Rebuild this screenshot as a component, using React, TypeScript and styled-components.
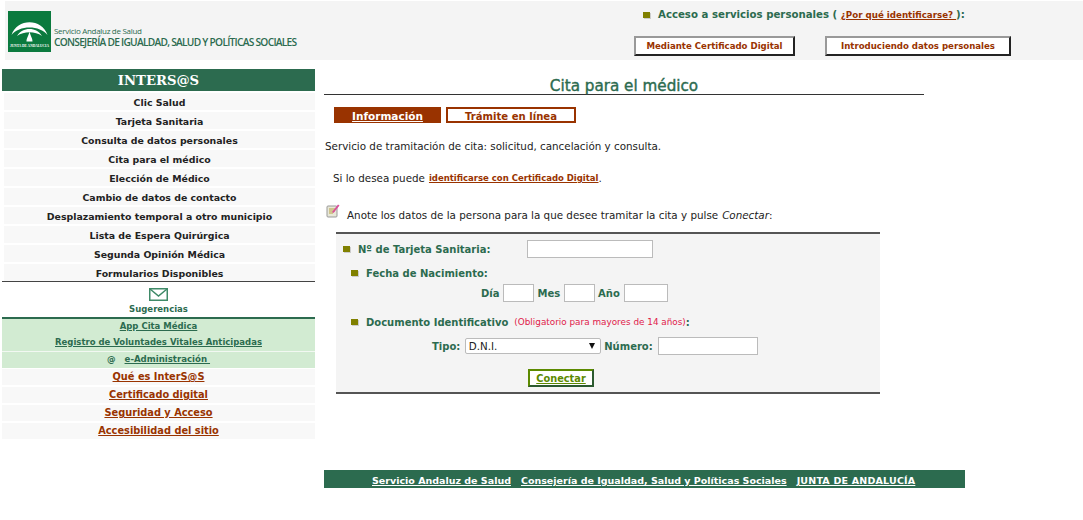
import React from "react";
import styled, { createGlobalStyle } from "styled-components";

const GlobalStyle = createGlobalStyle`
  html, body {
    margin: 0;
    padding: 0;
    background: #fff;
    font-family: "DejaVu Sans", Verdana, sans-serif;
    font-size: 10px;
  }
`;

const green = "#2c6b4f";
const brown = "#993300";

const Page = styled.div`
  width: 1083px;
  height: 520px;
  overflow: hidden;
`;

const Header = styled.header`
  margin: 1px 0 0 5px;
  height: 59px;
  background: #f4f4f4;
  display: flex;
`;

const Brand = styled.div`
  width: 629px;
  padding: 10px 0 0 3px;
  box-sizing: border-box;
  display: flex;
  align-items: flex-start;
`;

const BrandText = styled.div`
  margin: 15px 0 0 3px;
  color: ${green};
  font-family: "Open Sans", sans-serif;
`;

const BrandSmall = styled.div`
  font-size: 8px;
  line-height: 10px;
  letter-spacing: -0.3px;
`;

const BrandBig = styled.div`
  font-size: 10.2px;
  line-height: 12px;
  font-weight: 600;
  letter-spacing: -0.73px;
  white-space: nowrap;
`;

const Access = styled.div`
  padding-top: 7px;
`;

const AccessLine = styled.div`
  height: 14px;
  line-height: 14px;
  padding-left: 9px;
  display: flex;
  align-items: center;
  color: ${green};
  font-weight: bold;
  font-size: 10.2px;
  white-space: pre;
`;

const Bullet = styled.span<{ $gap: number }>`
  display: inline-block;
  flex: none;
  width: 7px;
  height: 6px;
  background: #808000;
  box-shadow: 1px 1px 0 #ccc;
  margin-right: ${(p) => p.$gap}px;
`;

const AccessLink = styled.a`
  color: ${brown};
  font-size: 8.7px;
  text-decoration: underline;
`;

const AccessButtons = styled.div`
  display: flex;
  gap: 30px;
  margin: 14px 0 0 0;
`;

const AccessButton = styled.button<{ $w: number }>`
  width: ${(p) => p.$w}px;
  height: 20px;
  padding: 0;
  background: #fff;
  border: 2px solid;
  border-color: #999 #222 #222 #999;
  color: ${brown};
  font: bold 8.6px "DejaVu Sans", sans-serif;
`;

const Main = styled.div`
  display: flex;
  margin-top: 9px;
`;

const Sidebar = styled.nav`
  width: 313px;
  margin-left: 2px;
  flex: none;
`;

const SideTitle = styled.div`
  height: 22px;
  background: ${green};
  color: #fff;
  text-align: center;
  font: bold 13.2px/24px "DejaVu Serif", serif;
`;

const MenuList = styled.div`
  display: flex;
  flex-direction: column;
  gap: 2px;
  margin-top: 2px;
`;

const MenuRow = styled.a`
  display: block;
  height: 17px;
  line-height: 20px;
  margin-left: 2px;
  background: #f8f8f8;
  color: #222;
  font-weight: bold;
  font-size: 9.4px;
  text-align: center;
  overflow: hidden;
`;

const Suggest = styled.div`
  border-top: 1px solid #444;
  height: 29px;
  border-bottom: 2px solid ${green};
  display: flex;
  flex-direction: column;
  align-items: center;
  padding-top: 6px;
  color: ${green};
  font-weight: bold;
  font-size: 8.5px;
  gap: 3px;
`;

const GreenBlock = styled.div`
  background: #d2ebd2;
  border-bottom: 1px solid #f2f8f2;
  text-align: center;
`;

const GreenLink = styled.a`
  display: block;
  height: 16px;
  line-height: 15px;
  color: ${green};
  font-weight: bold;
  font-size: 8.5px;
  text-decoration: underline;
`;

const GreenAt = styled.div`
  background: #d2ebd2;
  height: 16px;
  line-height: 15px;
  text-align: center;
  color: ${green};
  font-weight: bold;
  font-size: 8.6px;
  white-space: pre;
  a {
    text-decoration: underline;
  }
`;

const RedList = styled.div`
  display: flex;
  flex-direction: column;
  gap: 2px;
  margin-top: 1px;
`;

const RedRow = styled.a`
  display: block;
  height: 16px;
  line-height: 16px;
  background: #f8f8f8;
  color: ${brown};
  font-weight: bold;
  font-size: 9.8px;
  text-align: center;
  text-decoration: underline;
`;

const Content = styled.main`
  margin-left: 9px;
  width: 641px;
`;

const Title = styled.h1`
  width: 600px;
  margin: 0;
  height: 25px;
  line-height: 34px;
  border-bottom: 1px solid #333;
  color: ${green};
  font-size: 15.2px;
  font-weight: normal;
  -webkit-text-stroke: 0.4px ${green};
  text-align: center;
`;

const Tabs = styled.div`
  display: flex;
  gap: 5px;
  margin: 12px 0 0 10px;
`;

const Tab = styled.a<{ $active?: boolean; $w: number }>`
  width: ${(p) => p.$w}px;
  height: 16px;
  box-sizing: border-box;
  line-height: 15px;
  text-align: center;
  font-weight: bold;
  font-size: ${(p) => (p.$active ? 10.5 : 10.1)}px;
  border: 2px solid ${brown};
  background: ${(p) => (p.$active ? brown : "#fff")};
  color: ${(p) => (p.$active ? "#fff" : brown)};
  text-decoration: ${(p) => (p.$active ? "underline" : "none")};
`;

const Para = styled.p<{ $indent: number; $top: number }>`
  margin: ${(p) => p.$top}px 0 0 ${(p) => p.$indent}px;
  height: 14px;
  line-height: 14px;
  color: #222;
  font-size: 10.35px;
  white-space: nowrap;
  display: flex;
  align-items: center;
  a {
    color: ${brown};
    font-weight: bold;
    font-size: 8.5px;
    text-decoration: underline;
    margin-left: 4px;
  }
  em {
    margin-left: 4px;
  }
`;

const NoteIcon = styled.svg`
  flex: none;
  margin: -9px 7px 0 -1px;
`;

const FormBox = styled.form`
  margin: 10px 0 0 12px;
  width: 544px;
  height: 162px;
  box-sizing: border-box;
  background: #f4f4f4;
  border-top: 2px solid #555;
  border-bottom: 2px solid #555;
`;

const Field = styled.div<{ $top: number; $indent: number }>`
  display: flex;
  align-items: center;
  margin: ${(p) => p.$top}px 0 0 ${(p) => p.$indent}px;
  height: 20px;
  color: ${green};
  font-weight: bold;
  font-size: 10px;
  white-space: pre;
`;

const Note = styled.span`
  margin-left: 6px;
  color: #e0204a;
  font-weight: normal;
  font-size: 8.85px;
`;

const TextInput = styled.input<{ $w: number; $ml?: number }>`
  width: ${(p) => p.$w}px;
  height: 18px;
  margin-left: ${(p) => p.$ml ?? 0}px;
  box-sizing: border-box;
  padding: 0;
  background: #fff;
  border: 1px solid #bbb;
`;

const SelectWrap = styled.span`
  position: relative;
  display: inline-block;
  height: 16px;
  margin-left: 1px;
  &::after {
    content: "";
    position: absolute;
    right: 6px;
    top: 5px;
    border-left: 3.5px solid transparent;
    border-right: 3.5px solid transparent;
    border-top: 6px solid #111;
  }
`;

const Select = styled.select`
  appearance: none;
  display: block;
  width: 136px;
  height: 16px;
  padding: 0 0 0 3px;
  box-sizing: border-box;
  background: #fff;
  border: 1px solid #bbb;
  border-radius: 2px;
  font: 10.3px "DejaVu Sans", sans-serif;
  color: #222;
`;

const Connect = styled.button`
  display: block;
  margin: 13px 0 0 192px;
  width: 66px;
  height: 18px;
  padding: 0;
  background: #fff;
  border: 2px solid;
  border-color: #5c8a00 #2c5a30 #2c5a30 #5c8a00;
  color: #5c8a00;
  font: bold 9.8px "DejaVu Sans", sans-serif;
  text-decoration: underline;
`;

const Footer = styled.footer`
  margin-top: 76px;
  height: 18px;
  background: ${green};
  display: flex;
  gap: 10px;
  padding-left: 48px;
  line-height: 22px;
`;

const FootLink = styled.a<{ $spaced?: boolean }>`
  color: #fff;
  font-weight: bold;
  font-size: 9.5px;
  letter-spacing: ${(p) => (p.$spaced ? "0.2px" : "normal")};
  text-decoration: underline;
  white-space: nowrap;
`;

const menu = [
  "Clic Salud",
  "Tarjeta Sanitaria",
  "Consulta de datos personales",
  "Cita para el médico",
  "Elección de Médico",
  "Cambio de datos de contacto",
  "Desplazamiento temporal a otro municipio",
  "Lista de Espera Quirúrgica",
  "Segunda Opinión Médica",
  "Formularios Disponibles",
];

const extras = [
  "Qué es InterS@S",
  "Certificado digital",
  "Seguridad y Acceso",
  "Accesibilidad del sitio",
];

function Logo() {
  return (
    <svg width="43" height="41" viewBox="0 0 43 41">
      <rect width="43" height="41" fill="#0b7a3e" />
      <path d="M3.5 24 C9 7 34 7 39.5 24 C32 14 11 14 3.5 24Z" fill="#fff" />
      <path d="M9 25 C14 15.5 29 15.5 34 25 C27 20 16 20 9 25Z" fill="#fff" />
      <path d="M21.5 20.5 C22.5 25 24.5 27 24.5 30.5 L18.5 30.5 C18.5 27 20.5 25 21.5 20.5Z" fill="#fff" />
      <text x="21.5" y="36" textAnchor="middle" fontSize="3.5" fontWeight="bold" fontFamily="Liberation Serif, serif" fill="#fff">
        JUNTA DE ANDALUCIA
      </text>
    </svg>
  );
}

export default function App() {
  return (
    <Page>
      <GlobalStyle />
      <Header>
        <Brand>
          <Logo />
          <BrandText>
            <BrandSmall>Servicio Andaluz de Salud</BrandSmall>
            <BrandBig>CONSEJERÍA DE IGUALDAD, SALUD Y POLÍTICAS SOCIALES</BrandBig>
          </BrandText>
        </Brand>
        <Access>
          <AccessLine>
            <Bullet $gap={8} />
            Acceso a servicios personales ( <AccessLink>¿Por qué identificarse? </AccessLink>):
          </AccessLine>
          <AccessButtons>
            <AccessButton $w={161}>Mediante Certificado Digital</AccessButton>
            <AccessButton $w={186}>Introduciendo datos personales</AccessButton>
          </AccessButtons>
        </Access>
      </Header>
      <Main>
        <Sidebar>
          <SideTitle>INTERS@S</SideTitle>
          <MenuList>
            {menu.map((m) => (
              <MenuRow key={m}>{m}</MenuRow>
            ))}
          </MenuList>
          <Suggest>
            <svg width="19" height="13" viewBox="0 0 19 13">
              <rect x="0.75" y="0.75" width="17.5" height="11.5" fill="#fff" stroke="#3f8a68" strokeWidth="1.5" />
              <path d="M1 1 L9.5 8 L18 1" fill="none" stroke="#3f8a68" strokeWidth="1.5" />
            </svg>
            Sugerencias
          </Suggest>
          <GreenBlock>
            <GreenLink>App Cita Médica</GreenLink>
            <GreenLink>Registro de Voluntades Vitales Anticipadas</GreenLink>
          </GreenBlock>
          <GreenAt>
            {"@   "}
            <a>e-Administración </a>
          </GreenAt>
          <RedList>
            {extras.map((e) => (
              <RedRow key={e}>{e}</RedRow>
            ))}
          </RedList>
        </Sidebar>
        <Content>
          <Title>Cita para el médico</Title>
          <Tabs>
            <Tab $active $w={107}>Información</Tab>
            <Tab $w={130}>Trámite en línea</Tab>
          </Tabs>
          <Para $indent={1} $top={16}>Servicio de tramitación de cita: solicitud, cancelación y consulta.</Para>
          <Para $indent={9} $top={18}>
            Si lo desea puede <a>identificarse con Certificado Digital</a>.
          </Para>
          <Para $indent={3} $top={23}>
            <NoteIcon width="14" height="15" viewBox="0 0 14 15">
              <rect x="1" y="3" width="10" height="11" rx="1" fill="#e8e8d8" stroke="#999" />
              <path d="M3 6h6M3 8h6M3 10h4" stroke="#b8a040" />
              <path d="M6 9 L12 1.5 L13.5 2.5 L7.5 10 Z" fill="#d8509a" />
            </NoteIcon>
            Anote los datos de la persona para la que desee tramitar la cita y pulse<em>Conectar</em>:
          </Para>
          <FormBox>
            <Field $top={5} $indent={7}>
              <Bullet $gap={8} />
              Nº de Tarjeta Sanitaria:
              <TextInput $w={126} $ml={37} />
            </Field>
            <Field $top={4} $indent={15}>
              <Bullet $gap={8} />
              Fecha de Nacimiento:
            </Field>
            <Field $top={0} $indent={145}>
              Día <TextInput $w={31} /> Mes <TextInput $w={31} /> Año <TextInput $w={44} $ml={1} />
            </Field>
            <Field $top={9} $indent={15}>
              <Bullet $gap={8} />
              Documento Identificativo<Note>(Obligatorio para mayores de 14 años)</Note>:
            </Field>
            <Field $top={4} $indent={96}>
              Tipo: <SelectWrap><Select><option>D.N.I.</option></Select></SelectWrap> Número: <TextInput $w={100} $ml={2} />
            </Field>
            <Connect type="button">Conectar</Connect>
          </FormBox>
          <Footer>
            <FootLink>Servicio Andaluz de Salud</FootLink>
            <FootLink>Consejería de Igualdad, Salud y Políticas Sociales</FootLink>
            <FootLink $spaced>JUNTA DE ANDALUCÍA</FootLink>
          </Footer>
        </Content>
      </Main>
    </Page>
  );
}
